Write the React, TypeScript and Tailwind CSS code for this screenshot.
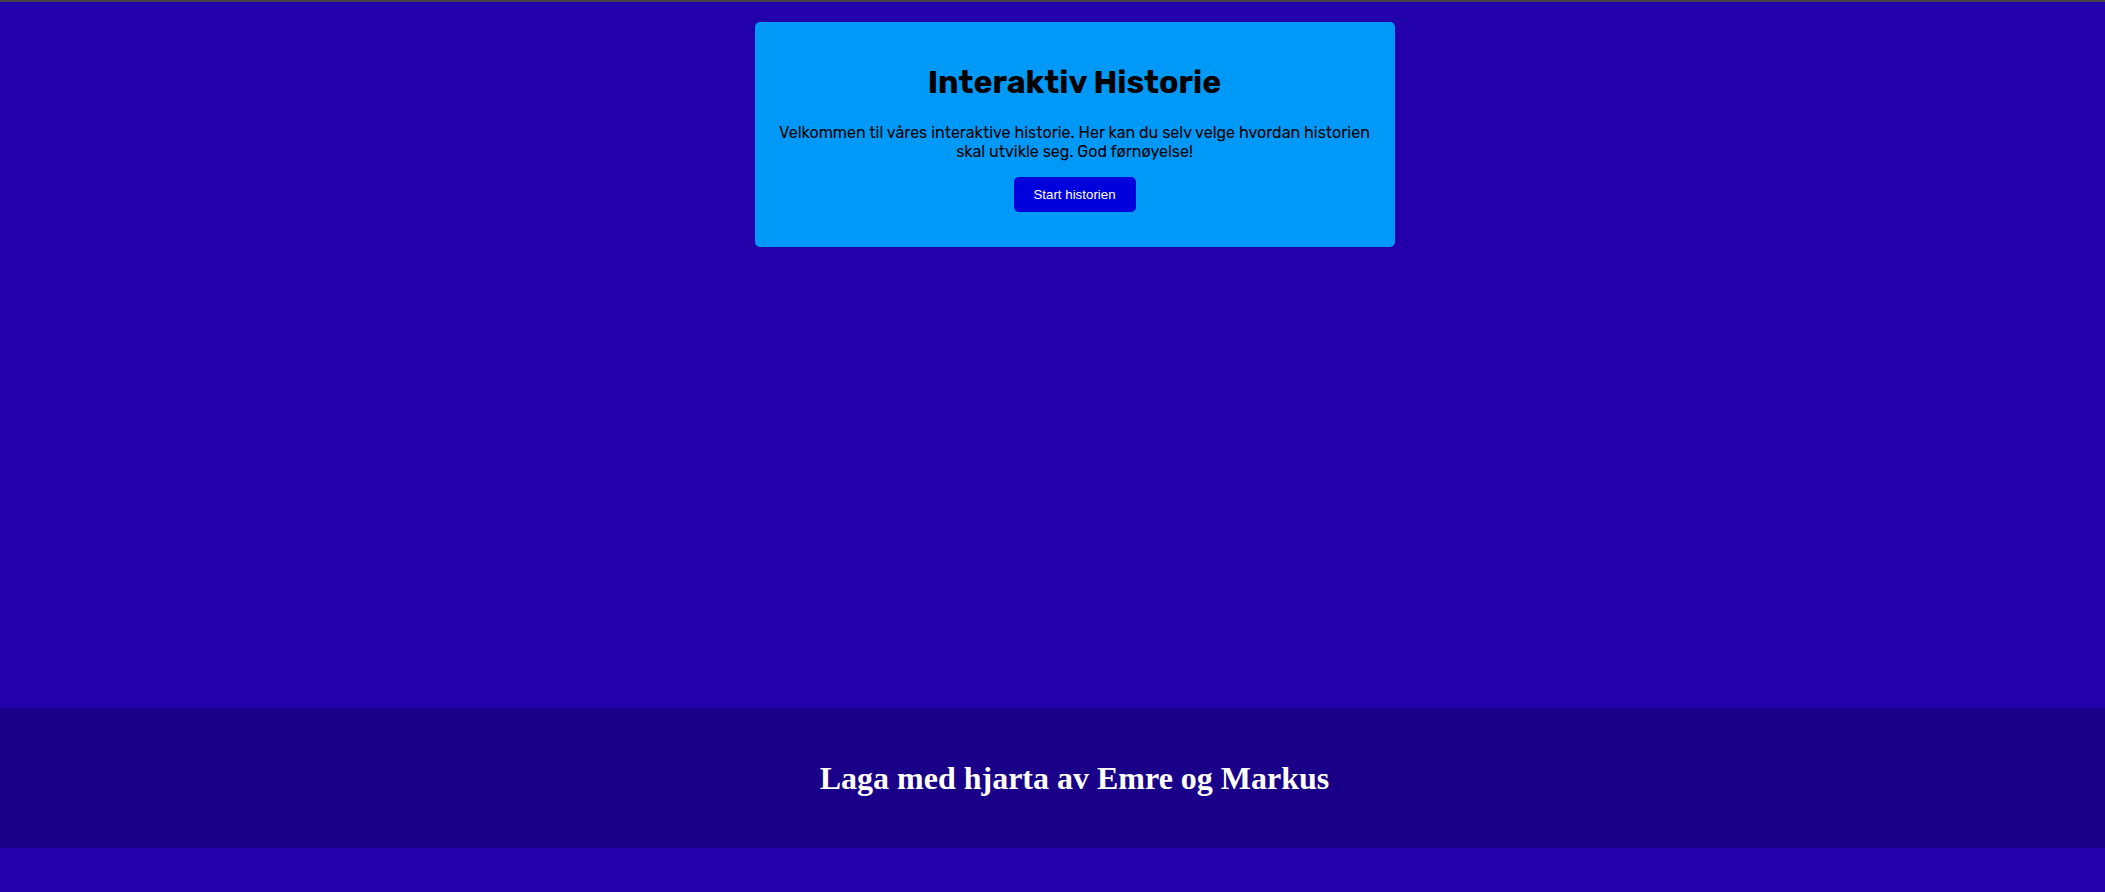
import React from "react";

export default function App() {
  return (
    <div className="min-h-[892px] w-full bg-[#2200aa] border-t-2 border-[#454545]">
      <main className="h-[706px] pl-[44px] pt-[20px]">
        <div
          className="mx-auto w-[640px] rounded-[5px] bg-[#0099f7] px-[20px] pt-[20px] pb-[35px] text-center text-black"
          style={{ fontFamily: "Rubik, Inter, 'Noto Sans', sans-serif" }}
        >
          <h1 className="mt-[21px] mb-[22px] text-[32px] font-bold leading-[38px]">
            Interaktiv Historie
          </h1>
          <p className="text-[16px] leading-[19px]">
            Velkommen til våres interaktive historie. Her kan du selv velge hvordan historien skal utvikle seg. God førnøyelse!
          </p>
          <button
            className="mt-[16px] h-[35px] w-[122px] rounded-[5px] bg-[#0000dd] text-[13.33px] text-white"
            style={{ fontFamily: "'Liberation Sans', Arial, sans-serif" }}
          >
            Start historien
          </button>
        </div>
      </main>
      <footer className="flex h-[140px] items-center justify-center bg-[#1a0088] pl-[44px]">
        <h2
          className="text-[32px] font-bold leading-[37px] text-white"
          style={{ fontFamily: "'Liberation Serif', 'Times New Roman', serif" }}
        >
          Laga med hjarta av Emre og Markus
        </h2>
      </footer>
    </div>
  );
}
